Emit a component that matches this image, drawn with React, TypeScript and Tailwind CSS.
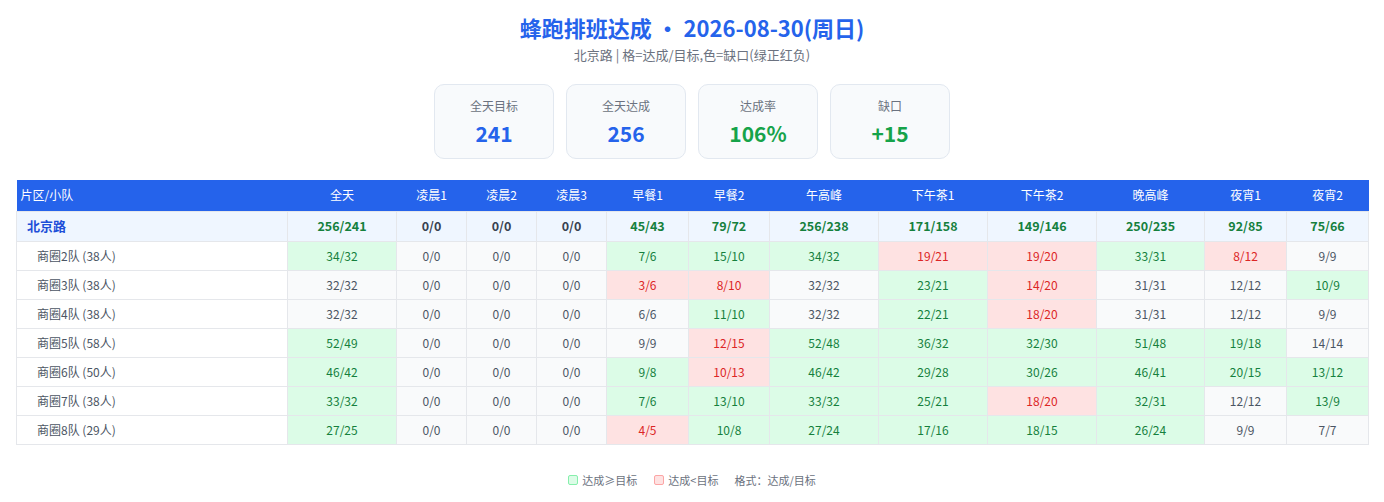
const COLS = ['全天', '凌晨1', '凌晨2', '凌晨3', '早餐1', '早餐2', '午高峰', '下午茶1', '下午茶2', '晚高峰', '夜宵1', '夜宵2']
const WIDTHS = ['w-[109px]', 'w-[70px]', 'w-[70px]', 'w-[70px]', 'w-[82px]', 'w-[81px]', 'w-[109px]', 'w-[109px]', 'w-[109px]', 'w-[108px]', 'w-[82px]', 'w-[82px]']

const summary = ['256/241', '0/0', '0/0', '0/0', '45/43', '79/72', '256/238', '171/158', '149/146', '250/235', '92/85', '75/66']

const teams: { name: string; cells: string[] }[] = [
  { name: '商圈2队 (38人)', cells: ['34/32', '0/0', '0/0', '0/0', '7/6', '15/10', '34/32', '19/21', '19/20', '33/31', '8/12', '9/9'] },
  { name: '商圈3队 (38人)', cells: ['32/32', '0/0', '0/0', '0/0', '3/6', '8/10', '32/32', '23/21', '14/20', '31/31', '12/12', '10/9'] },
  { name: '商圈4队 (38人)', cells: ['32/32', '0/0', '0/0', '0/0', '6/6', '11/10', '32/32', '22/21', '18/20', '31/31', '12/12', '9/9'] },
  { name: '商圈5队 (58人)', cells: ['52/49', '0/0', '0/0', '0/0', '9/9', '12/15', '52/48', '36/32', '32/30', '51/48', '19/18', '14/14'] },
  { name: '商圈6队 (50人)', cells: ['46/42', '0/0', '0/0', '0/0', '9/8', '10/13', '46/42', '29/28', '30/26', '46/41', '20/15', '13/12'] },
  { name: '商圈7队 (38人)', cells: ['33/32', '0/0', '0/0', '0/0', '7/6', '13/10', '33/32', '25/21', '18/20', '32/31', '12/12', '13/9'] },
  { name: '商圈8队 (29人)', cells: ['27/25', '0/0', '0/0', '0/0', '4/5', '10/8', '27/24', '17/16', '18/15', '26/24', '9/9', '7/7'] },
]

// gap sign: done - target
function diff(v: string) {
  const [a, b] = v.split('/').map(Number)
  return a - b
}

function cellClass(v: string) {
  const d = diff(v)
  if (d > 0) return 'bg-[#dcfce7] text-[#15803d]'
  if (d < 0) return 'bg-[#fee2e2] text-[#dc2626]'
  return 'bg-[#f9fafb] text-[#4b5563]'
}

const stats = [
  { label: '全天目标', value: '241', color: 'text-[#2563eb]' },
  { label: '全天达成', value: '256', color: 'text-[#2563eb]' },
  { label: '达成率', value: '106%', color: 'text-[#16a34a]' },
  { label: '缺口', value: '+15', color: 'text-[#16a34a]' },
]

export default function App() {
  return (
    <div className="min-h-[502px] bg-white px-4 pt-[13px] font-['Noto_Sans_CJK_SC','Noto_Sans',sans-serif]">
      <h1 className="text-center text-[22px] font-bold leading-[28px] text-[#2563eb]">
        蜂跑排班达成 · 2026-08-30(周日)
      </h1>
      <p className="mt-[4px] text-center text-[13px] leading-[20px] text-[#6b7280]">
        北京路 | 格=达成/目标,色=缺口(绿正红负)
      </p>

      <div className="mt-[19px] flex justify-center gap-[12px]">
        {stats.map((s) => (
          <div
            key={s.label}
            className="flex h-[75px] w-[120px] flex-col items-center rounded-[10px] border border-[#e2e8f0] bg-[#f8fafc] pt-[12px]"
          >
            <div className="text-[12px] leading-[18px] text-[#6b7280]">{s.label}</div>
            <div className={`mt-[4px] text-[21px] font-bold leading-[28px] ${s.color}`}>{s.value}</div>
          </div>
        ))}
      </div>

      <table className="mt-[21px] w-[1352px] table-fixed border-collapse text-[12px]">
        <thead>
          <tr className="h-[31px] bg-[#2563eb] text-white">
            <th className="w-[271px] pl-[4px] text-left font-normal">片区/小队</th>
            {COLS.map((c, i) => (
              <th key={c} className={`${WIDTHS[i]} text-center font-normal`}>
                {c}
              </th>
            ))}
          </tr>
        </thead>
        <tbody>
          <tr className="h-[30px] bg-[#eff6ff]">
            <td className="border border-[#e5e7eb] pl-[10px] text-[13px] font-bold text-[#1d4ed8]">北京路</td>
            {summary.map((v, i) => (
              <td
                key={i}
                className={`border border-[#e5e7eb] text-center text-[12.5px] font-bold ${diff(v) > 0 ? 'text-[#15803d]' : 'text-[#374151]'}`}
              >
                {v}
              </td>
            ))}
          </tr>
          {teams.map((t) => (
            <tr key={t.name} className="h-[29px]">
              <td className="border border-[#e5e7eb] bg-white pl-[20px] text-[#4b5563]">{t.name}</td>
              {t.cells.map((v, i) => (
                <td key={i} className={`border border-[#e5e7eb] text-center ${cellClass(v)}`}>
                  {v}
                </td>
              ))}
            </tr>
          ))}
        </tbody>
      </table>

      <div className="mt-[26px] flex items-center justify-center text-[11px] leading-[18px] text-[#6b7280]">
        <span className="mr-[4px] inline-block h-[10px] w-[10px] rounded-[2px] border border-[#86efac] bg-[#dcfce7]" />
        <span>达成≥目标</span>
        <span className="ml-[17px] mr-[4px] inline-block h-[10px] w-[10px] rounded-[2px] border border-[#fca5a5] bg-[#fee2e2]" />
        <span>达成&lt;目标</span>
        <span className="ml-[16px]">格式：达成/目标</span>
      </div>
    </div>
  )
}
